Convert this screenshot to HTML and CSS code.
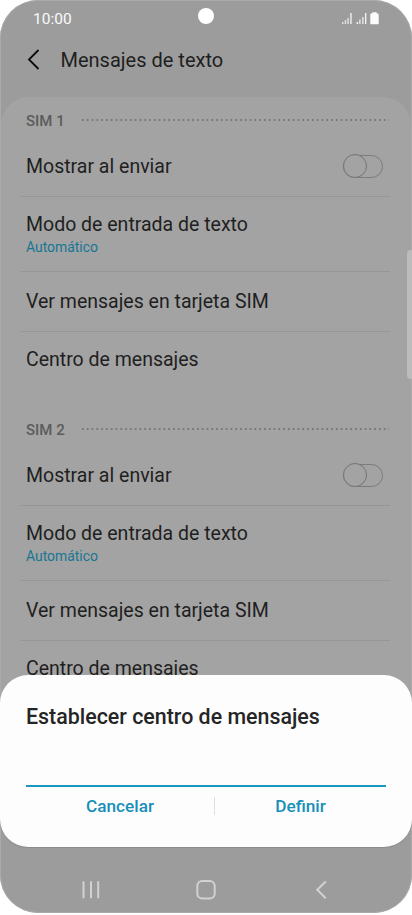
FILE: index.html
```html
<!DOCTYPE html>
<html lang="es">
<head>
    <meta charset="UTF-8">
    <meta name="viewport" content="width=device-width, initial-scale=1.0">
    <title>Mensajes de texto</title>
    <link rel="stylesheet" href="styles.css">
</head>
<body>
    <div class="phone">
        <div class="statusbar">
            <span class="time">10:00</span>
            <svg class="status-icons" width="40" height="14" viewBox="0 0 40 14">
                <g fill="#dedede">
                    <rect x="1" y="10" width="1.5" height="2"/>
                    <rect x="3.7" y="8" width="1.5" height="4"/>
                    <rect x="6.3" y="6" width="1.5" height="6"/>
                    <rect x="9" y="1" width="1.8" height="11"/>
                </g>
                <g fill="#f4f4f4">
                    <rect x="15.6" y="10" width="1.5" height="2"/>
                    <rect x="18.3" y="7.5" width="1.2" height="4.5"/>
                    <rect x="21.3" y="5" width="1.2" height="7"/>
                    <rect x="24" y="1" width="1.3" height="11"/>
                </g>
                <path d="M31.3 1.5V.2h4.4v1.3h1.2q.8 0 .8.8v9.2q0 .8-.8.8h-6.8q-.8 0-.8-.8V2.3q0-.8.8-.8z" fill="#fcfcfc"/>
            </svg>
            <div class="camera"></div>
        </div>
        <div class="titlebar">
            <svg width="14" height="22" viewBox="0 0 14 22">
                <path d="M11.500 1L2 10.500l9.500 9.500" fill="none" stroke="#0c0c0c" stroke-width="1.800"/>
            </svg>
            <h1>Mensajes de texto</h1>
        </div>
        <div class="settings">
            <div class="section">
                <div class="section-head"><span>SIM 1</span><svg class="dots" width="307" height="2"><path d="M0 1H307" /></svg></div>
                <div class="row"><span class="label">Mostrar al enviar</span><div class="toggle"></div></div>
                <div class="row tall"><span class="label">Modo de entrada de texto</span><span class="value">Automático</span></div>
                <div class="row"><span class="label">Ver mensajes en tarjeta SIM</span></div>
                <div class="row last"><span class="label">Centro de mensajes</span></div>
            </div>
            <div class="section">
                <div class="section-head"><span>SIM 2</span><svg class="dots" width="307" height="2"><path d="M0 1H307" /></svg></div>
                <div class="row"><span class="label">Mostrar al enviar</span><div class="toggle"></div></div>
                <div class="row tall"><span class="label">Modo de entrada de texto</span><span class="value">Automático</span></div>
                <div class="row"><span class="label">Ver mensajes en tarjeta SIM</span></div>
                <div class="row last"><span class="label">Centro de mensajes</span></div>
            </div>
        </div>
        <div class="edge-handle"></div>
        <div class="bottom">
            <div class="dialog">
                <h2>Establecer centro de mensajes</h2>
                <div class="field"></div>
                <div class="actions">
                    <button>Cancelar</button>
                    <div class="separator"></div>
                    <button>Definir</button>
                </div>
            </div>
            <div class="navbar">
                <svg width="20" height="20" viewBox="0 0 20 20"><path d="M2.500 1.300v17M10 1.300v17M17.200 1.300v17"/></svg>
                <svg width="20" height="20" viewBox="0 0 20 20"><rect x="1.300" y="1" width="17.400" height="17.400" rx="5"/></svg>
                <svg width="20" height="20" viewBox="0 0 20 20"><path d="M14.700 1.500L6.300 9.800l8.400 8.400"/></svg>
            </div>
        </div>
    </div>
</body>
</html>
```

FILE: styles.css
```css
body {
    margin: 0;
    background: white;
    font-family: Roboto, "Liberation Sans", sans-serif;
    color: #1f1f1f;
}
.phone {
    position: relative;
    box-sizing: border-box;
    width: 412px;
    height: 913px;
    background: #9c9c9c;
    border-radius: 38px;
    overflow: hidden;
    box-shadow: inset 0 0 0 1px #aaa;
}
.statusbar {
    display: flex;
    justify-content: space-between;
    align-items: center;
    height: 36px;
    padding: 0 31px 0 33px;
}
.time {
    padding-top: 1px;
    font-size: 15.5px;
    color: #fafafa;
}
.status-icons {
    margin-top: 1px;
}
.camera {
    position: absolute;
    top: 8px;
    left: 198px;
    width: 16px;
    height: 16px;
    border-radius: 50%;
    background: white;
}
.titlebar {
    display: flex;
    align-items: center;
    height: 47px;
    padding: 0 27px 14px;
    gap: 19.5px;
}
h1 {
    margin: 0;
    font-size: 20px;
    font-weight: 400;
}
.settings {
    height: 720px;
    margin: 0 1px;
    background: #a3a3a3;
    border-radius: 28px 28px 0 0;
    overflow: hidden;
}
.section {
    height: 309px;
    padding: 0 21px 0 20px;
}
.section-head {
    display: flex;
    align-items: center;
    justify-content: space-between;
    height: 40px;
    padding: 7px 1px 0 5px;
    box-sizing: border-box;
    font-size: 15px;
    font-weight: 500;
    color: #5c5c5c;
}
.dots {
    margin-bottom: 1px;
}
.dots path {
    stroke: #6c6c6c;
    stroke-width: 1.6;
    stroke-dasharray: 1.8 2.99;
}
.row {
    display: flex;
    align-items: center;
    justify-content: space-between;
    box-sizing: border-box;
    height: 60px;
    padding: 1px 7px 0 5px;
    border-bottom: 1px solid #969696;
}
.tall {
    flex-direction: column;
    align-items: flex-start;
    justify-content: center;
    height: 75px;
    padding-top: 2px;
}
.last {
    height: 55px;
    border: none;
}
.label {
    font-size: 19.5px;
    line-height: 24px;
}
.value {
    font-size: 13.9px;
    line-height: 21px;
    color: #177694;
}
.toggle {
    box-sizing: border-box;
    width: 40px;
    height: 23px;
    margin-top: -2px;
    border: 1.500px solid #7b7b7b;
    border-radius: 12px;
}
.toggle::before {
    content: "";
    display: block;
    box-sizing: border-box;
    width: 24px;
    height: 24px;
    margin: -1.500px;
    border: 1px solid #747474;
    border-radius: 50%;
    background: #a3a3a3;
}
.edge-handle {
    position: absolute;
    top: 250px;
    right: 0;
    width: 5px;
    height: 129px;
    border-radius: 4px 0 0 4px;
    background: #bcbcbc;
}
.bottom {
    position: absolute;
    left: 0;
    right: 0;
    bottom: 0;
}
.dialog {
    box-sizing: border-box;
    height: 172px;
    padding: 29px 26px 0;
    background: #fdfdfd;
    border-radius: 28px;
    box-shadow: 0 1px 1px #8b8b8b;
}
h2 {
    margin: 0;
    font-size: 21.4px;
    line-height: 26px;
    font-weight: 500;
    color: #252525;
    white-space: nowrap;
}
.field {
    height: 55px;
    border-bottom: 2px solid #1a97be;
}
.actions {
    display: grid;
    grid-template-columns: 188px 1px 1fr;
    align-items: center;
    padding-top: 9px;
}
.separator {
    height: 18px;
    background: #dedede;
}
button {
    padding: 0;
    border: none;
    background: none;
    font-family: inherit;
    font-size: 17.2px;
    line-height: 20px;
    font-weight: 500;
    color: #178fb8;
    cursor: pointer;
}
.navbar {
    display: flex;
    justify-content: space-between;
    align-items: center;
    height: 66px;
    padding: 19px 81px 0;
    box-sizing: border-box;
}
.navbar svg {
    fill: none;
    stroke: #d2d2d2;
    stroke-width: 2;
}
```
